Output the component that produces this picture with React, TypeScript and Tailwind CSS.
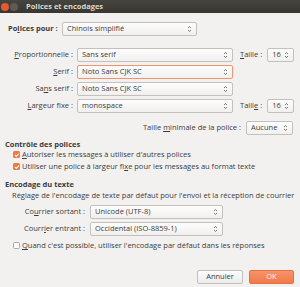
import React from "react";

const Arrows = () => (
  <svg width="5" height="8" viewBox="0 0 5 8" className="shrink-0">
    <path d="M1 3 L2.5 1.5 L4 3" fill="none" stroke="#6b6965" strokeWidth="0.9" />
    <path d="M1 5 L2.5 6.5 L4 5" fill="none" stroke="#6b6965" strokeWidth="0.9" />
  </svg>
);

const Select = ({ value, className = "", focused = false }: { value: string; className?: string; focused?: boolean }) => (
  <div
    className={`flex h-[14px] items-center justify-between rounded-[2px] border bg-gradient-to-b from-[#fdfdfd] to-[#f1f0ef] pl-[4px] pr-[4px] ${
      focused ? "border-[#f0946f]" : "border-[#c4c1bd]"
    } ${className}`}
  >
    <span className="leading-none">{value}</span>
    <Arrows />
  </div>
);

const Check = ({ checked }: { checked: boolean }) =>
  checked ? (
    <div className="flex h-[7px] w-[7px] shrink-0 items-center justify-center rounded-[1.5px] bg-[#f07746]">
      <svg width="6" height="6" viewBox="0 0 6 6">
        <path d="M1 3 L2.4 4.4 L5 1.5" fill="none" stroke="#fff" strokeWidth="1.1" />
      </svg>
    </div>
  ) : (
    <div className="h-[7px] w-[7px] shrink-0 rounded-[1.5px] border border-[#aaa7a3] bg-[#fbfbfb]" />
  );

export default function App() {
  return (
    <div
      className="h-[287px] w-[300px] overflow-hidden bg-[#f2f1f0] text-[7.5px] text-[#3c3c3c]"
      style={{ fontFamily: '"Open Sans", "Noto Sans", sans-serif' }}
    >
      {/* title bar */}
      <div className="flex h-[13px] items-center bg-gradient-to-b from-[#45443f] to-[#37362f] pl-[1px]">
        <div className="h-[8px] w-[8px] rounded-full bg-[#e25a2d]" />
        <div className="ml-[1px] h-[8px] w-[8px] rounded-full bg-[#5c5b57]" />
        <span className="ml-[8px] font-bold text-[#dcd8ce]">Polices et encodages</span>
      </div>

      <div className="mt-[9px] flex items-center pl-[8px]">
        <span className="w-[50px] font-bold">
          Po<u>l</u>ices pour :
        </span>
        <Select value="Chinois simplifié" className="ml-[4px] w-[135px]" />
      </div>

      <div className="mt-[12px] flex flex-col gap-[3px]">
        <div className="flex items-center">
          <span className="w-[73px] text-right">
            <u>P</u>roportionnelle :
          </span>
          <Select value="Sans serif" className="ml-[4px] w-[156px]" />
          <span className="ml-[7px]">
            <u>T</u>aille :
          </span>
          <Select value="16" className="ml-[5px] w-[27px]" />
        </div>
        <div className="flex items-center">
          <span className="w-[73px] text-right">
            <u>S</u>erif :
          </span>
          <Select value="Noto Sans CJK SC" focused className="ml-[4px] w-[156px]" />
        </div>
        <div className="flex items-center">
          <span className="w-[73px] text-right">
            Sa<u>n</u>s serif :
          </span>
          <Select value="Noto Sans CJK SC" className="ml-[4px] w-[156px]" />
        </div>
        <div className="flex items-center">
          <span className="w-[73px] text-right">
            <u>L</u>argeur fixe :
          </span>
          <Select value="monospace" className="ml-[4px] w-[156px]" />
          <span className="ml-[7px]">
            Taill<u>e</u> :
          </span>
          <Select value="16" className="ml-[5px] w-[27px]" />
        </div>
      </div>

      <div className="mt-[8px] flex items-center justify-end pr-[7px]">
        <span>
          Taille <u>m</u>inimale de la police :
        </span>
        <Select value="Aucune" className="ml-[5px] w-[47px]" />
      </div>

      <div className="mt-[4px] pl-[5px] font-bold leading-[10px]">Contrôle des polices</div>
      <div className="mt-[1px] flex flex-col gap-[3px] pl-[13px]">
        <div className="flex h-[9px] items-center gap-[2px]">
          <Check checked />
          <span>
            <u>A</u>utoriser les messages à utiliser d'autres polices
          </span>
        </div>
        <div className="flex h-[9px] items-center gap-[2px]">
          <Check checked />
          <span>
            Utiliser une police à largeur fi<u>x</u>e pour les messages au format texte
          </span>
        </div>
      </div>

      <div className="mt-[8px] pl-[5px] font-bold leading-[10px]">Encodage du texte</div>
      <div className="mt-[1px] pl-[12px] leading-[10px]">
        Réglage de l'encodage de texte par défaut pour l'envoi et la réception de courrier
      </div>

      <div className="mt-[5px] flex flex-col gap-[3px]">
        <div className="flex items-center">
          <span className="w-[85px] text-right">
            Co<u>u</u>rrier sortant :
          </span>
          <Select value="Unicode (UTF-8)" className="ml-[5px] w-[133px]" />
        </div>
        <div className="flex items-center">
          <span className="w-[85px] text-right">
            Courr<u>i</u>er entrant :
          </span>
          <Select value="Occidental (ISO-8859-1)" className="ml-[5px] w-[133px]" />
        </div>
      </div>

      <div className="mt-[5px] flex h-[9px] items-center gap-[2px] pl-[13px]">
        <Check checked={false} />
        <span>
          <u>Q</u>uand c'est possible, utiliser l'encodage par défaut dans les réponses
        </span>
      </div>

      <div className="mt-[20px] flex justify-end gap-[6px] pr-[6px]">
        <button className="h-[14px] w-[46px] rounded-[2px] border border-[#c4c1bd] bg-gradient-to-b from-[#fdfdfd] to-[#ecebea] leading-none">
          Annuler
        </button>
        <button className="h-[14px] w-[45px] rounded-[2px] border border-[#e6703f] bg-gradient-to-b from-[#f7936a] to-[#f07a4a] leading-none text-[#fdf3ee]">
          OK
        </button>
      </div>
    </div>
  );
}
